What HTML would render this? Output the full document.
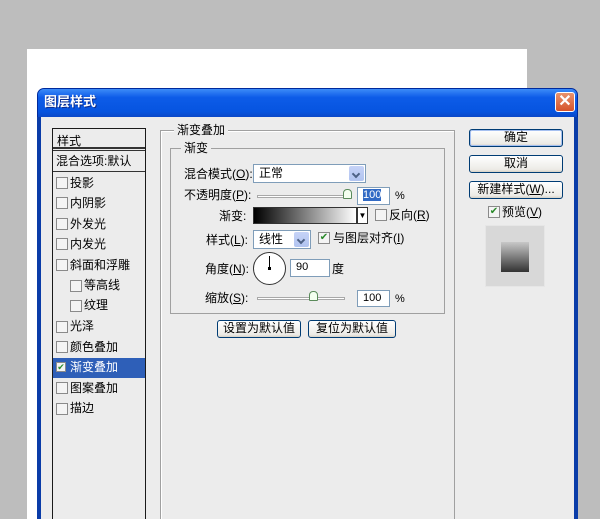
<!DOCTYPE html><html style="width:600px;height:519px;overflow:hidden"><head><meta charset="utf-8"><style>
*{margin:0;padding:0;box-sizing:border-box}
body{width:600px;height:519px;overflow:hidden;background:#bdbdbd;position:relative;font-family:"Liberation Sans","Noto Sans CJK SC","WenQuanYi Zen Hei",sans-serif;font-size:12px;color:#000}
.a{position:absolute}
.t{position:absolute;white-space:nowrap;line-height:14px}
.btn{position:absolute;border:1px solid #003c74;border-radius:3px;background:linear-gradient(#fff,#ecebe6 85%,#d6d0c5);text-align:center;line-height:15px;font-size:12px}
.cb{position:absolute;width:12px;height:12px;border:1px solid #8a8a8a;background:#f4f4f4}
.inp{position:absolute;background:#fff;border:1px solid #7f9db9;font-size:11px;line-height:15px;padding-left:5px}
.dd{position:absolute;background:#fff;border:1px solid #7f9db9;padding-left:5px;line-height:17px}
.dd i{position:absolute;right:1px;top:1px;bottom:1px;width:15px;background:linear-gradient(#c6d3f7,#b1c4f0);border-radius:2px}
.dd i:after{content:"";position:absolute;left:4px;top:5px;width:4px;height:4px;border-right:2px solid #4d6185;border-bottom:2px solid #4d6185;transform:rotate(45deg)}
</style></head><body>
<div class="a" style="left:27px;top:49px;width:500px;height:470px;background:#fff"></div>
<div class="a" style="left:37px;top:88px;width:541px;height:431px;background:#0a4cd8;border-radius:7px 7px 0 0;border:1px solid #002a9c"></div>
<div class="a" style="left:38px;top:89px;width:539px;height:28px;background:linear-gradient(#3d8cf8,#0d5ce8 30%,#0654e0 80%,#0a48c8);border-radius:6px 6px 0 0"></div>
<div class="t" style="left:44px;top:95px;color:#fff;font-weight:bold;font-size:13px;text-shadow:1px 1px #0a2a8a">图层样式</div>
<div class="a" style="left:555px;top:92px;width:20px;height:20px;border:1px solid #fff;border-radius:3px;background:linear-gradient(#e9936e,#d5532a);color:#fff;font-size:16px;font-weight:bold;text-align:center;line-height:18px">✕</div>
<div class="a" style="left:41px;top:117px;width:533px;height:402px;background:#ececec"></div>

<div class="a" style="left:52px;top:128px;width:94px;height:400px;border:1px solid #1a1a1a;background:#ececec">
<div class="a" style="left:0;top:18px;width:92px;height:4px;border-top:2px solid #333;border-bottom:1px solid #333"></div>
<div class="t" style="left:4px;top:5px">样式</div>
<div class="a" style="left:0;top:42px;width:92px;border-top:1px solid #333"></div>
<div class="t" style="left:3px;top:25px">混合选项:默认</div>
<div class="a" style="left:0;top:229px;width:92px;height:20px;background:#2e5fb8"></div>
</div>
<div class="cb" style="left:56px;top:177px"></div><div class="t" style="left:70px;top:176px">投影</div>
<div class="cb" style="left:56px;top:197px"></div><div class="t" style="left:70px;top:196px">内阴影</div>
<div class="cb" style="left:56px;top:218px"></div><div class="t" style="left:70px;top:217px">外发光</div>
<div class="cb" style="left:56px;top:238px"></div><div class="t" style="left:70px;top:237px">内发光</div>
<div class="cb" style="left:56px;top:259px"></div><div class="t" style="left:70px;top:258px">斜面和浮雕</div>
<div class="cb" style="left:70px;top:280px"></div><div class="t" style="left:84px;top:278px">等高线</div>
<div class="cb" style="left:70px;top:300px"></div><div class="t" style="left:84px;top:298px">纹理</div>
<div class="cb" style="left:56px;top:321px"></div><div class="t" style="left:70px;top:319px">光泽</div>
<div class="cb" style="left:56px;top:341px"></div><div class="t" style="left:70px;top:340px">颜色叠加</div>
<div class="cb" style="left:56px;top:362px;width:10px;height:10px;font-size:9px;line-height:8px;color:#2a8a2a;text-align:center">✔</div><div class="t" style="left:70px;top:360px;color:#fff">渐变叠加</div>
<div class="cb" style="left:56px;top:382px"></div><div class="t" style="left:70px;top:381px">图案叠加</div>
<div class="cb" style="left:56px;top:403px"></div><div class="t" style="left:70px;top:401px">描边</div>

<div class="a" style="left:160px;top:130px;width:295px;height:400px;border:1px solid #a0a0a0;box-shadow:1px 1px #fff inset"></div>
<div class="t" style="left:174px;top:123px;background:#ececec;padding:0 3px">渐变叠加</div>
<div class="a" style="left:170px;top:148px;width:275px;height:166px;border:1px solid #a0a0a0"></div>
<div class="t" style="left:181px;top:141px;background:#ececec;padding:0 3px">渐变</div>

<div class="t" style="left:184px;top:167px">混合模式(<u>O</u>):</div>
<div class="dd" style="left:253px;top:164px;width:113px;height:19px">正常<i></i></div>
<div class="t" style="left:184px;top:188px">不透明度(<u>P</u>):</div>
<div class="a" style="left:257px;top:195px;width:93px;height:3px;border:1px solid #a8a8a8;background:#fff"></div>
<div class="a" style="left:343px;top:189px;width:9px;height:10px;background:#f4fff0;border:1px solid #5a8a5a;border-radius:4px 4px 1px 1px"></div>
<div class="inp" style="left:357px;top:187px;width:33px;height:18px"><span style="background:#316ac5;color:#fff">100</span></div>
<div class="t" style="left:395px;top:189px;font-size:11px">%</div>
<div class="t" style="left:219px;top:209px">渐变:</div>
<div class="a" style="left:253px;top:207px;width:104px;height:17px;border:1px solid #333;background:linear-gradient(90deg,#000,#fff)"></div>
<div class="a" style="left:357px;top:207px;width:11px;height:17px;border:1px solid #333;background:#fff;font-size:8px;text-align:center;line-height:15px">▼</div>
<div class="cb" style="left:375px;top:209px"></div><div class="t" style="left:389px;top:208px">反向(<u>R</u>)</div>
<div class="t" style="left:206px;top:233px">样式(<u>L</u>):</div>
<div class="dd" style="left:253px;top:230px;width:58px;height:19px">线性<i></i></div>
<div class="cb" style="left:318px;top:232px;color:#2a8a2a;font-size:10px;line-height:10px;text-align:center">✔</div><div class="t" style="left:333px;top:231px">与图层对齐(<u>I</u>)</div>
<div class="t" style="left:205px;top:262px">角度(<u>N</u>):</div>
<div class="a" style="left:253px;top:252px;width:33px;height:33px;border:1px solid #333;border-radius:50%;background:#fff"></div>
<div class="a" style="left:269px;top:256px;width:1px;height:13px;background:#000"></div>
<div class="a" style="left:268px;top:267px;width:3px;height:3px;background:#000"></div>
<div class="inp" style="left:290px;top:259px;width:40px;height:18px">90</div>
<div class="t" style="left:332px;top:262px">度</div>
<div class="t" style="left:205px;top:291px">缩放(<u>S</u>):</div>
<div class="a" style="left:257px;top:297px;width:88px;height:3px;border:1px solid #a8a8a8;background:#fff"></div>
<div class="a" style="left:309px;top:291px;width:9px;height:10px;background:#f4fff0;border:1px solid #5a8a5a;border-radius:4px 4px 1px 1px"></div>
<div class="inp" style="left:357px;top:290px;width:33px;height:17px">100</div>
<div class="t" style="left:395px;top:292px;font-size:11px">%</div>
<div class="btn" style="left:217px;top:320px;width:84px;height:18px">设置为默认值</div>
<div class="btn" style="left:308px;top:320px;width:88px;height:18px">复位为默认值</div>

<div class="btn" style="left:469px;top:129px;width:94px;height:18px;box-shadow:0 0 0 1px #a6c0f0 inset">确定</div>
<div class="btn" style="left:469px;top:155px;width:94px;height:18px">取消</div>
<div class="btn" style="left:469px;top:181px;width:94px;height:18px">新建样式(<u>W</u>)...</div>
<div class="cb" style="left:488px;top:206px;color:#2a8a2a;font-size:10px;line-height:10px;text-align:center">✔</div><div class="t" style="left:502px;top:205px">预览(<u>V</u>)</div>
<div class="a" style="left:485px;top:225px;width:60px;height:62px;background:#d8d8d8;border:1px solid #e6e6e6"></div>
<div class="a" style="left:501px;top:242px;width:28px;height:30px;background:linear-gradient(#c8c8c8,#333)"></div>
<div class="a" style="left:574px;top:117px;width:4px;height:402px;background:#0a3ca8"></div>
<div class="a" style="left:37px;top:117px;width:4px;height:402px;background:#0a3ca8"></div>
</body></html>
